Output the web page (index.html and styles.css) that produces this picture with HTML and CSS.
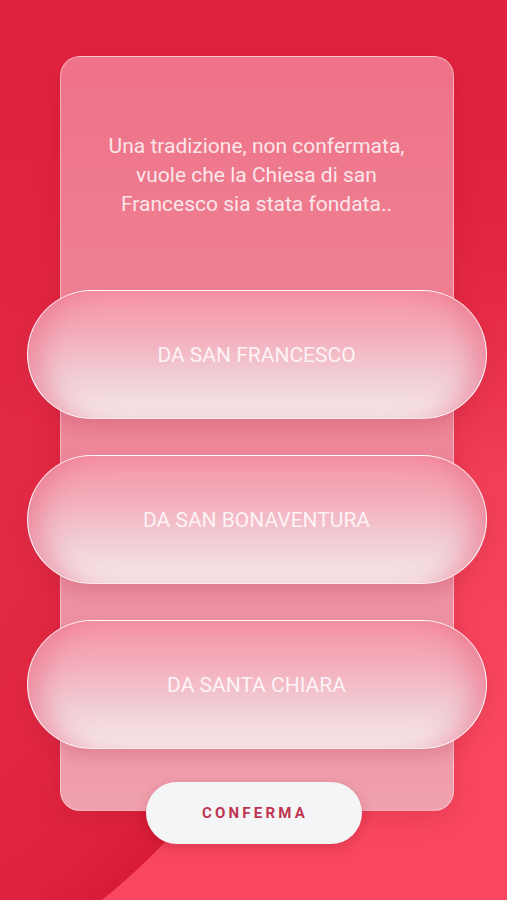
FILE: index.html
```html
<!DOCTYPE html>
<html lang="it">

<head>
    <meta charset="UTF-8">
    <meta name="viewport" content="width=device-width, initial-scale=1.0">
    <title>Quiz</title>
    <link rel="stylesheet" href="styles.css">
</head>

<body>
    <main class="quiz">
        <div class="card">
            <p class="question">Una tradizione, non confermata, vuole che la Chiesa di san Francesco sia stata fondata..</p>
            <div class="answers">
                <button class="answer">DA SAN FRANCESCO</button>
                <button class="answer">DA SAN BONAVENTURA</button>
                <button class="answer">DA SANTA CHIARA</button>
            </div>
        </div>
        <button class="confirm">CONFERMA</button>
    </main>
</body>

</html>
```

FILE: styles.css
```css
html,
body {
    margin: 0;
    padding: 0;
}

body {
    width: 507px;
    height: 900px;
    overflow: hidden;
    font-family: Roboto, "Open Sans", sans-serif;
    background:
        linear-gradient(180deg, #e1233f 0, #e1233f 160px, rgba(225, 35, 63, 0) 480px),
        radial-gradient(circle 642px at -300px 400px, #e5304a 0, #e22843 420px, #df233e 590px, #d81c37 641px, rgba(216, 28, 55, 0) 642px),
        linear-gradient(160deg, #e0213e 0%, #e4283f 30%, #f03d56 55%, #f8475f 85%);
}

.quiz {
    display: flex;
    flex-direction: column;
    align-items: center;
    padding: 56px 0 0 6px;
}

.card {
    width: 394px;
    height: 755px;
    box-sizing: border-box;
    border: 1px solid rgba(255, 255, 255, 0.4);
    border-radius: 20px;
    background: linear-gradient(180deg, #ee7288 0%, #ef7f92 30%, #ec8a9c 60%, #f0a0ae 100%);
    box-shadow: 0 6px 24px rgba(150, 10, 30, 0.18);
    display: flex;
    flex-direction: column;
}

.question {
    margin: 75px 45px 0;
    height: 158px;
    color: #fbe6ea;
    font-size: 21px;
    line-height: 29px;
    text-align: center;
}

.answers {
    display: flex;
    flex-direction: column;
    gap: 36px;
    margin: 0 -34px;
}

.answer {
    height: 129px;
    border-radius: 65px;
    border: 1.5px solid rgba(255, 255, 255, 0.8);
    background: linear-gradient(180deg, #f693a5 0%, #f3aebb 35%, #f1d0d7 70%, #f6e8eb 100%);
    box-shadow:
        inset 30px 0 26px -16px rgba(233, 110, 135, 0.6),
        inset -30px 0 26px -16px rgba(233, 110, 135, 0.6),
        0 8px 16px rgba(170, 40, 65, 0.2);
    color: #fdf3f5;
    font-family: inherit;
    font-size: 21px;
    cursor: pointer;
}

.confirm {
    margin: -29px 6px 0 0;
    width: 216px;
    height: 62px;
    border: none;
    border-radius: 31px;
    background: #f4f5f7;
    box-shadow: 0 4px 12px rgba(140, 10, 30, 0.25);
    color: #bf3450;
    font-family: inherit;
    font-size: 15px;
    font-weight: bold;
    letter-spacing: 3.2px;
    padding: 0 0 0 3px;
    cursor: pointer;
}
```
